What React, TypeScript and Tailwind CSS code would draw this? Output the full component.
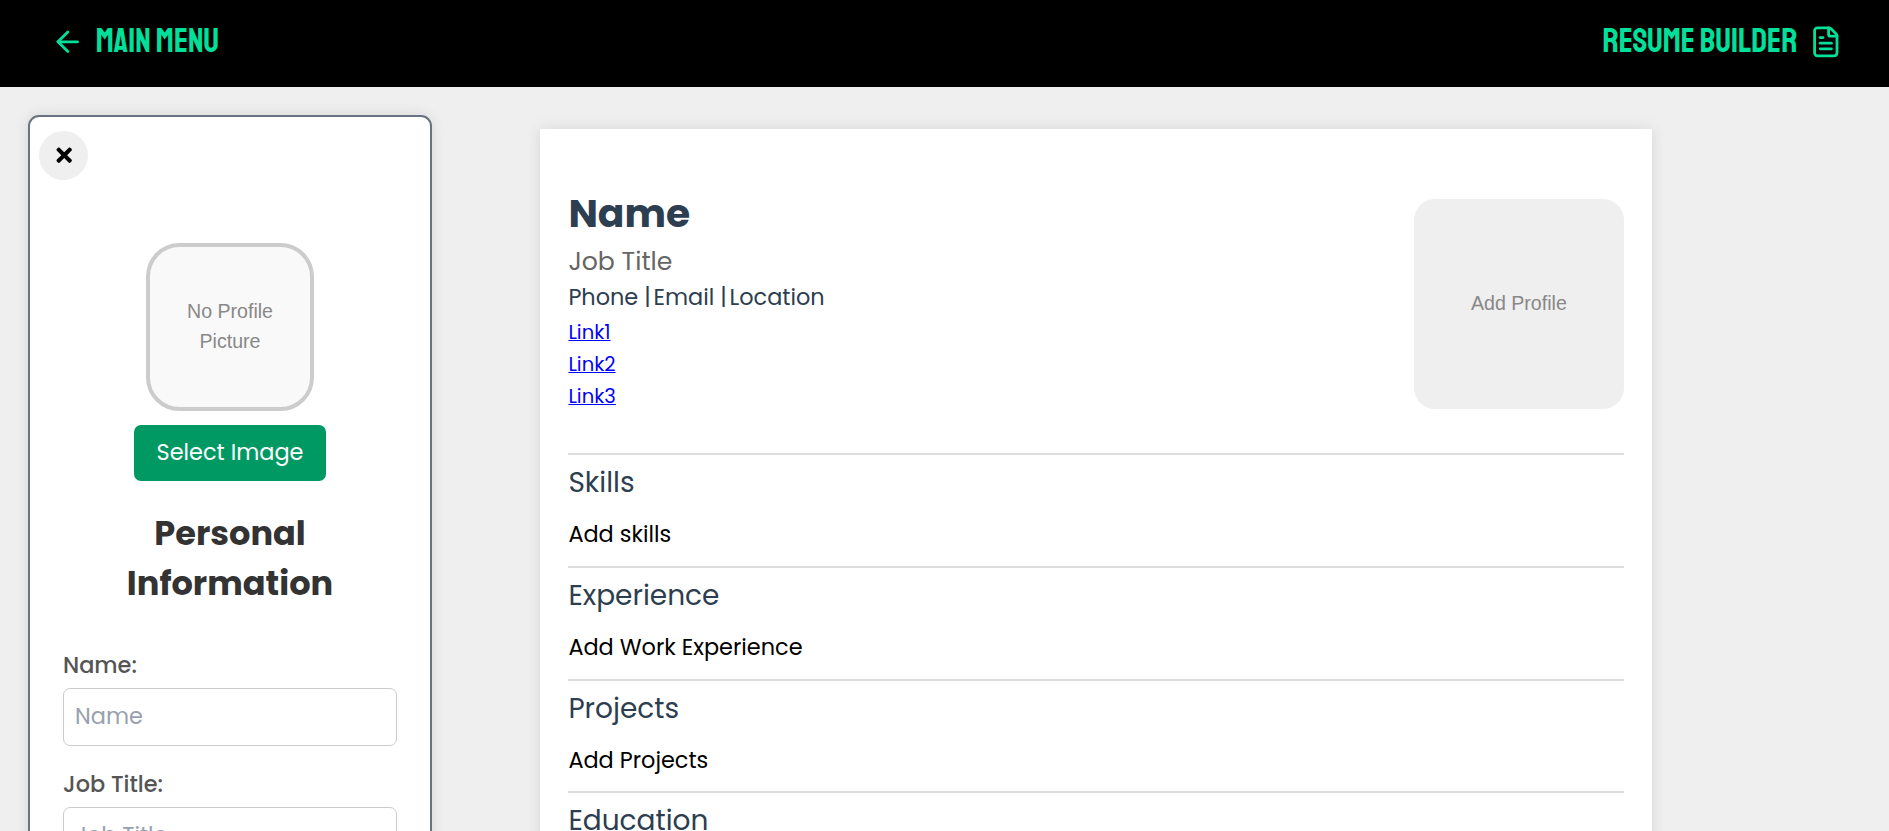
import React from "react";
import { ArrowLeft, FileText } from "lucide-react";
import { FaTimes } from "react-icons/fa";

const sections = [
  { title: "Skills", empty: "Add skills" },
  { title: "Experience", empty: "Add Work Experience" },
  { title: "Projects", empty: "Add Projects" },
  { title: "Education", empty: "Add Education" },
];

const links = ["Link1", "Link2", "Link3"];
const fields = ["Name", "Job Title"];

function Header() {
  return (
    <header className="flex h-[87px] shrink-0 items-center justify-between bg-black pr-[46px] pl-[51px] pb-1 font-['Staatliches','Bebas_Neue',Roboto,sans-serif] text-[33.6px] leading-[42px] text-[#00e09a]">
      <a className="flex items-center gap-[11.2px]">
        <ArrowLeft className="size-[33.6px]" />
        <span className="pb-0.5">MAIN MENU</span>
      </a>
      <div className="flex items-center gap-3">
        <span className="pb-0.5">RESUME BUILDER</span>
        <FileText className="size-[33.6px]" />
      </div>
    </header>
  );
}

function Sidebar() {
  return (
    <aside className="mt-7 ml-7 h-[900px] w-[404px] shrink-0 rounded-[11px] border-2 border-gray-500 bg-white shadow-[0_0_14px_rgba(0,0,0,0.1)]">
      <button className="mt-3.5 ml-[9.3px] flex size-[49px] items-center justify-center rounded-full bg-[#efefef]">
        <FaTimes className="size-[22.4px] text-black" />
      </button>
      <div className="mt-[63px] flex flex-col items-center">
        <div className="flex size-[168px] items-center justify-center rounded-[33.6px] border-4 border-[#ccc] bg-[#f9f9f9] px-6 pb-0.5 text-center font-['Liberation_Sans',Arial,sans-serif] text-[19.6px] leading-[30px] text-[#888]">
          No Profile Picture
        </div>
        <button className="mt-3.5 h-14 w-48 rounded-[7px] bg-[#009963] text-[22.4px] text-white">Select Image</button>
        <h2 className="mt-7 w-[260px] text-center text-[33.6px] leading-[50px] font-bold text-[#333]">
          Personal Information
        </h2>
      </div>
      <form className="mt-10 px-[33px]">
        {fields.map((f) => (
          <div key={f} className="mb-[22px]">
            <label className="mb-1.5 block text-[22.4px] leading-[33px] font-medium text-[#555]">{f}:</label>
            <input
              placeholder={f}
              className="block h-[58px] w-full rounded-[7px] border border-[#ccc] px-[11px] pb-0.5 text-[22.4px] placeholder:text-gray-400"
            />
          </div>
        ))}
      </form>
    </aside>
  );
}

function Resume() {
  return (
    <main className="mt-[42px] ml-[108.4px] h-[1572px] w-[1112px] shrink-0 bg-white px-7 pt-[70px] shadow-[0_0_14px_rgba(0,0,0,0.1)]">
      <div className="flex h-[254px] items-start justify-between">
        <div>
          <h1 className="-mt-3 text-[39.2px] leading-[54px] font-bold text-[#2c3e50]">Name</h1>
          <p className="mt-[3px] text-[25.2px] leading-[36px] text-[#666]">Job Title</p>
          <p className="flex text-[22.4px] leading-[34px] whitespace-pre text-[#2c3e50]">
            <span className="mr-[2.8px]">Phone |</span>
            <span className="mr-[2.8px]">Email |</span>
            <span>Location</span>
          </p>
          <ul className="mt-0.5">
            {links.map((l) => (
              <li key={l} className="h-8 text-[19.6px] leading-8">
                <a className="text-[#0000ff] underline">{l}</a>
              </li>
            ))}
          </ul>
        </div>
        <div className="flex size-[210px] items-center justify-center rounded-[21px] bg-[#efefef] pr-px font-['Liberation_Sans',Arial,sans-serif] text-[19.6px] text-[#888]">
          Add Profile
        </div>
      </div>
      {sections.map((s) => (
        <section key={s.title} className="h-[112.8px] border-t-2 border-[#ddd] pt-[7px]">
          <h3 className="text-[28px] leading-[42px] text-[#2c3e50]">{s.title}</h3>
          <p className="mt-3.5 text-[22.4px] leading-[33.6px] text-black">{s.empty}</p>
        </section>
      ))}
    </main>
  );
}

export default function App() {
  return (
    <div className="flex h-[831px] w-[1889px] flex-col overflow-hidden bg-[#efefef] font-['Poppins',Inter,sans-serif]">
      <Header />
      <div className="flex min-h-0 flex-1 items-start overflow-hidden">
        <Sidebar />
        <Resume />
      </div>
    </div>
  );
}
